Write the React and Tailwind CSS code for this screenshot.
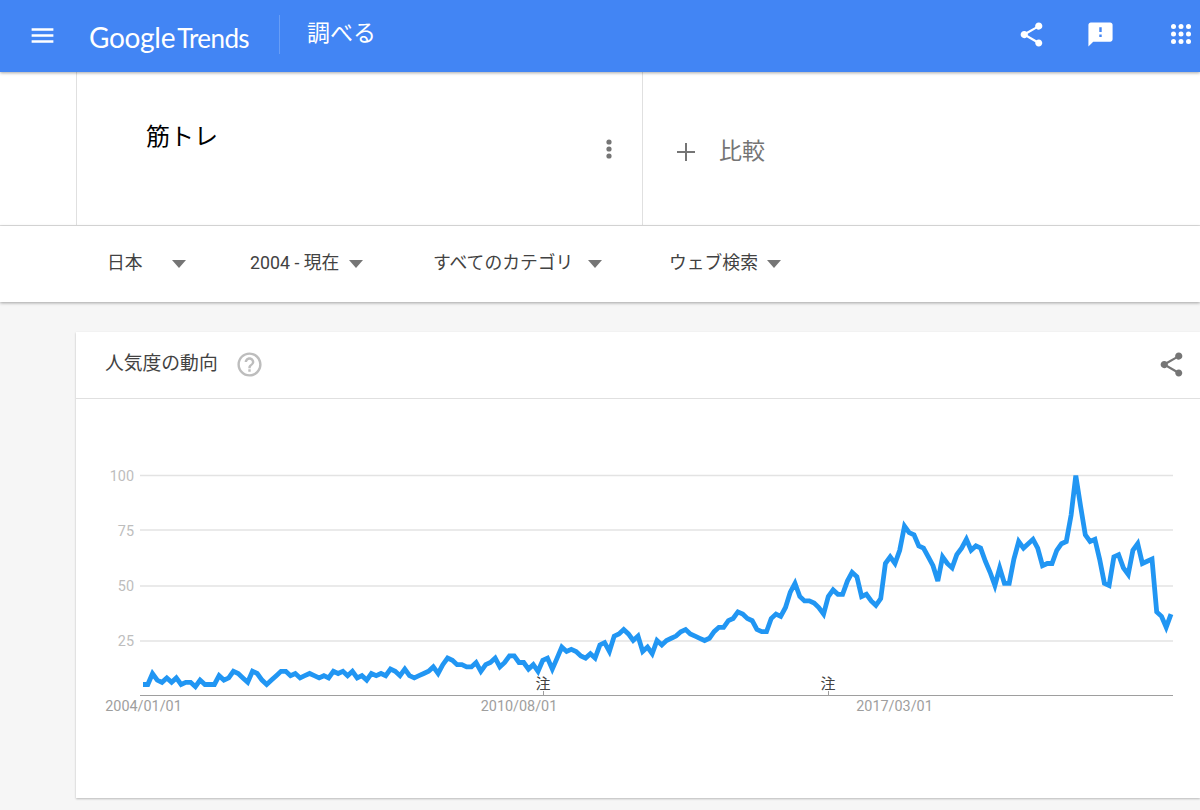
const FONT = '"Roboto", "Noto Sans CJK JP", sans-serif'

const TREND = [
  5, 5, 10, 7, 6, 8, 6, 8, 5, 6, 6, 4, 7, 5, 5, 5, 9, 7, 8, 11, 10, 8, 6, 11, 10, 7, 5, 7, 9, 11, 11, 9, 10, 8, 9, 10,
  9, 8, 9, 8, 11, 10, 11, 9, 11, 8, 9, 7, 10, 9, 10, 9, 12, 11, 9, 12, 9, 8, 9, 10, 11, 13, 10, 14, 17, 16, 14, 14, 13,
  13, 15, 11, 14, 15, 17, 13, 15, 18, 18, 15, 15, 12, 14, 11, 16, 17, 12, 17, 22, 20, 21, 20, 18, 17, 19, 17, 23, 24,
  20, 27, 28, 30, 28, 25, 27, 20, 22, 19, 25, 23, 25, 26, 27, 29, 30, 28, 27, 26, 25, 26, 29, 31, 31, 34, 35, 38, 37,
  35, 34, 30, 29, 29, 35, 37, 36, 40, 47, 51, 45, 43, 43, 42, 40, 37, 45, 48, 46, 46, 52, 56, 54, 45, 46, 43, 41, 44,
  60, 63, 60, 66, 77, 74, 73, 68, 67, 63, 59, 52, 63, 60, 58, 64, 67, 71, 66, 68, 67, 61, 56, 50, 58, 51, 51, 62, 70,
  67, 69, 71, 67, 59, 60, 60, 66, 69, 70, 82, 100, 86, 73, 70, 71, 62, 51, 50, 63, 64, 58, 55, 66, 69, 60, 61, 62, 38,
  36, 31, 37,
]

const linePoints = TREND.map((v, i) => {
  const x = 143 + (i * (1171 - 143)) / (TREND.length - 1)
  const y = 695.5 - v * 2.2
  return `${x.toFixed(1)},${y.toFixed(1)}`
}).join(' ')

const SHARE =
  'M18 16.08c-.76 0-1.44.3-1.96.77L8.91 12.7c.05-.23.09-.46.09-.7s-.04-.47-.09-.7l7.05-4.11c.54.5 1.25.81 2.04.81 1.66 0 3-1.34 3-3s-1.34-3-3-3-3 1.34-3 3c0 .24.04.47.09.7L8.04 9.81C7.5 9.31 6.79 9 6 9c-1.66 0-3 1.34-3 3s1.34 3 3 3c.79 0 1.5-.31 2.04-.81l7.12 4.16c-.05.21-.08.43-.08.65 0 1.61 1.31 2.92 2.92 2.92 1.61 0 2.92-1.31 2.92-2.92s-1.31-2.92-2.92-2.92z'
const FEEDBACK =
  'M20 2H4c-1.1 0-1.99.9-1.99 2L2 22l4-4h14c1.1 0 2-.9 2-2V4c0-1.1-.9-2-2-2zm-7 12h-2v-2h2v2zm0-4h-2V6h2v4z'
const MENU = 'M3 18h18v-2H3v2zm0-5h18v-2H3v2zm0-7v2h18V6H3z'
const HELP =
  'M11 18h2v-2h-2v2zm1-16C6.48 2 2 6.48 2 12s4.48 10 10 10 10-4.48 10-10S17.52 2 12 2zm0 18c-4.41 0-8-3.59-8-8s3.59-8 8-8 8 3.59 8 8-3.59 8-8 8zm0-14c-2.21 0-4 1.79-4 4h2c0-1.1.9-2 2-2s2 .9 2 2c0 2-3 1.75-3 5h2c0-2.25 3-2.5 3-5 0-2.21-1.79-4-4-4z'

function Icon({ d, className }) {
  return (
    <svg viewBox="0 0 24 24" className={className} fill="currentColor">
      <path d={d} />
    </svg>
  )
}

function Caret() {
  return (
    <svg viewBox="0 0 14 8" className="h-[8px] w-[14px] shrink-0 text-[#757575]" fill="currentColor">
      <path d="M0 0h14L7 8z" />
    </svg>
  )
}

function Filter({ label, width, gap }) {
  return (
    <div className={'flex items-center ' + width}>
      <span className={'mb-[1px] text-[17.8px] text-[#424242] ' + gap}>{label}</span>
      <Caret />
    </div>
  )
}

function AppsIcon() {
  const pos = [2.5, 10, 17.5]
  return (
    <svg viewBox="0 0 20 20" className="h-[20px] w-[20px]" fill="currentColor">
      {pos.map((y) => pos.map((x) => <circle key={`${x}-${y}`} cx={x} cy={y} r="2.5" />))}
    </svg>
  )
}

function Chart() {
  return (
    <svg viewBox="76 399 1124 399" className="block h-[399px] w-[1124px]">
      {[475.5, 530, 586, 641].map((y) => (
        <line key={y} x1="140" x2="1173" y1={y} y2={y} stroke="#e3e3e3" strokeWidth="1.4" />
      ))}
      {[
        ['100', 481],
        ['75', 535.5],
        ['50', 591],
        ['25', 646],
      ].map(([t, y]) => (
        <text key={t} x="134" y={y} textAnchor="end" fontSize="14.4" fill="#bdbdbd" fontFamily={FONT}>
          {t}
        </text>
      ))}
      <line x1="140" x2="1173" y1="695.5" y2="695.5" stroke="#9e9e9e" strokeWidth="1.2" />
      <line x1="543.5" x2="543.5" y1="691" y2="695" stroke="#9e9e9e" strokeWidth="1" />
      <line x1="828.5" x2="828.5" y1="691" y2="695" stroke="#9e9e9e" strokeWidth="1" />
      <polyline points={linePoints} fill="none" stroke="#2196f3" strokeWidth="4.8" strokeLinejoin="miter" />
      {[
        ['2004/01/01', 143.5],
        ['2010/08/01', 519],
        ['2017/03/01', 894.5],
      ].map(([t, x]) => (
        <text key={t} x={x} y="711" textAnchor="middle" fontSize="14.4" fill="#9e9e9e" fontFamily={FONT}>
          {t}
        </text>
      ))}
      <text x="543" y="689" textAnchor="middle" fontSize="15" fill="#424242" fontFamily={FONT}>
        注
      </text>
      <text x="828" y="689" textAnchor="middle" fontSize="15" fill="#424242" fontFamily={FONT}>
        注
      </text>
    </svg>
  )
}

export default function App() {
  return (
    <div className="h-[810px] w-[1200px] overflow-hidden bg-[#f6f6f6]" style={{ fontFamily: FONT }}>
      <header className="relative z-20 flex h-[72px] items-center bg-[#4285f4] pl-[28px] pr-[9px] text-white shadow-[0_1px_3px_rgba(0,0,0,0.35)]">
        <Icon d={MENU} className="mb-[2px] h-[29px] w-[29px]" />
        <div
          className="ml-[32px] mt-[2px] flex w-[161px] items-baseline leading-none"
          style={{ fontFamily: '"Lato", sans-serif' }}
        >
          <span className="text-[28px] tracking-[-0.3px]">Google</span>
          <span className="ml-[2px] text-[26px] tracking-[-0.6px]">Trends</span>
        </div>
        <div className="ml-[29px] mb-[4px] h-[39px] w-px bg-white/20" />
        <div className="ml-[27px] mb-[6px] text-[23px] leading-none">調べる</div>
        <div className="ml-auto mb-[4px] flex items-center">
          <Icon d={SHARE} className="h-[29px] w-[29px]" />
          <Icon d={FEEDBACK} className="ml-[40px] h-[29px] w-[29px]" />
          <div className="ml-[56px]">
            <AppsIcon />
          </div>
        </div>
      </header>

      <section className="flex h-[154px] border-b border-[#e0e0e0] bg-white pl-[76px]">
        <div className="relative w-[567px] border-x border-[#e0e0e0] pl-[69px] pt-[49px]">
          <div className="text-[24px] leading-[32px] text-black">筋トレ</div>
          <svg viewBox="0 0 6 20" className="absolute left-[529px] top-[67px] h-[20px] w-[6px] text-[#757575]" fill="currentColor">
            <circle cx="3" cy="3" r="2.6" />
            <circle cx="3" cy="10" r="2.6" />
            <circle cx="3" cy="17" r="2.6" />
          </svg>
        </div>
        <div className="flex items-start pl-[34px] pt-[64px] text-[#757575]">
          <svg viewBox="0 0 18 18" className="mt-[7px] h-[18px] w-[18px]" fill="currentColor">
            <path d="M8 0h2v8h8v2h-8v8H8v-8H0V8h8z" />
          </svg>
          <span className="ml-[24px] text-[23px] leading-[32px]">比較</span>
        </div>
      </section>

      <section className="relative z-10 flex h-[76px] items-center bg-white pl-[107px] shadow-[0_1px_3px_rgba(0,0,0,0.35)]">
        <Filter label="日本" width="w-[143px]" gap="mr-[29px]" />
        <Filter label="2004 - 現在" width="w-[183px]" gap="mr-[10px]" />
        <Filter label="すべてのカテゴリ" width="w-[236px]" gap="mr-[15px]" />
        <Filter label="ウェブ検索" width="w-[130px]" gap="mr-[9px]" />
      </section>

      <section className="ml-[76px] mt-[30px] h-[466px] bg-white shadow-[0_1px_2px_rgba(0,0,0,0.25)]">
        <div className="flex h-[67px] items-center border-b border-[#e0e0e0] pl-[29px] pr-[14px]">
          <h2 className="mb-[1px] text-[18.8px] font-normal text-[#424242]">人気度の動向</h2>
          <Icon d={HELP} className="ml-[17px] mb-[2px] h-[29px] w-[29px] text-[#bdbdbd]" />
          <Icon d={SHARE} className="ml-auto mb-[2px] h-[29px] w-[29px] text-[#757575]" />
        </div>
        <Chart />
      </section>
    </div>
  )
}
